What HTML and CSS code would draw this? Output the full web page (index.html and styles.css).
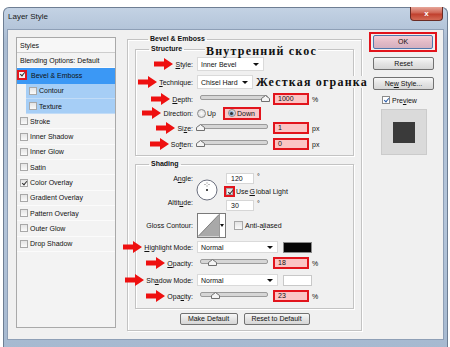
FILE: index.html
```html
<!DOCTYPE html>
<html lang="en">

<head>
    <meta charset="UTF-8">
    <meta name="viewport" content="width=device-width, initial-scale=1.0">
    <title>Layer Style</title>
    <link rel="stylesheet" href="styles.css">
</head>

<body>
    <!-- window -->
    <div class="window">
        <div class="titlebar">
            <span class="title">Layer Style</span>
            <a class="close" href="javascript:;">x</a>
        </div>

        <div class="content">
            <!-- styles list -->
            <ul class="styles">
                <li class="head">Styles</li>
                <li class="plain">Blending Options: Default</li>
                <li class="sel"><span class="cb on mark"></span>Bevel &amp; Emboss</li>
                <li class="sub"><span class="cb"></span>Contour</li>
                <li class="sub"><span class="cb"></span>Texture</li>
                <li><span class="cb"></span>Stroke</li>
                <li><span class="cb"></span>Inner Shadow</li>
                <li><span class="cb"></span>Inner Glow</li>
                <li><span class="cb"></span>Satin</li>
                <li><span class="cb on"></span>Color Overlay</li>
                <li><span class="cb"></span>Gradient Overlay</li>
                <li><span class="cb"></span>Pattern Overlay</li>
                <li><span class="cb"></span>Outer Glow</li>
                <li><span class="cb"></span>Drop Shadow</li>
            </ul>

            <!-- bevel & emboss -->
            <fieldset class="group outer">
                <legend>Bevel &amp; Emboss</legend>

                <fieldset class="group structure">
                    <legend>Structure</legend>
                    <div class="row r-style">
                        <label class="lbl"><svg class="arrow" width="19" height="12" viewBox="0 0 19 12"><polygon points="0,3.5 10,3.5 10,0 19,6 10,12 10,8.5 0,8.5"/></svg><span><u>S</u>tyle:</span></label>
                        <div class="select w-style">Inner Bevel</div>
                    </div>
                    <div class="row r-tech">
                        <label class="lbl"><svg class="arrow" width="19" height="12" viewBox="0 0 19 12"><polygon points="0,3.5 10,3.5 10,0 19,6 10,12 10,8.5 0,8.5"/></svg><span><u>T</u>echnique:</span></label>
                        <div class="select w-tech">Chisel Hard</div>
                    </div>
                    <div class="row r-depth">
                        <label class="lbl"><svg class="arrow" width="19" height="12" viewBox="0 0 19 12"><polygon points="0,3.5 10,3.5 10,0 19,6 10,12 10,8.5 0,8.5"/></svg><span><u>D</u>epth:</span></label>
                        <div class="slider"><span class="thumb" style="left:97%"><svg width="9" height="7" viewBox="0 0 9 7"><polygon points="0.5,6.5 0.5,3.5 4.5,0.5 8.5,3.5 8.5,6.5"/></svg></span></div>
                        <div class="num">1000</div><span class="unit">%</span>
                    </div>
                    <div class="row r-dir">
                        <label class="lbl"><svg class="arrow" width="19" height="12" viewBox="0 0 19 12"><polygon points="0,3.5 10,3.5 10,0 19,6 10,12 10,8.5 0,8.5"/></svg><span>Direction:</span></label>
                        <span class="radio"></span><span class="up">Up</span>
                        <div class="down"><span class="radio on"></span>Down</div>
                    </div>
                    <div class="row r-size">
                        <label class="lbl"><svg class="arrow" width="19" height="12" viewBox="0 0 19 12"><polygon points="0,3.5 10,3.5 10,0 19,6 10,12 10,8.5 0,8.5"/></svg><span>Si<u>z</u>e:</span></label>
                        <div class="slider"><span class="thumb" style="left:0%"><svg width="9" height="7" viewBox="0 0 9 7"><polygon points="0.5,6.5 0.5,3.5 4.5,0.5 8.5,3.5 8.5,6.5"/></svg></span></div>
                        <div class="num">1</div><span class="unit">px</span>
                    </div>
                    <div class="row r-soft">
                        <label class="lbl"><svg class="arrow" width="19" height="12" viewBox="0 0 19 12"><polygon points="0,3.5 10,3.5 10,0 19,6 10,12 10,8.5 0,8.5"/></svg><span>So<u>f</u>ten:</span></label>
                        <div class="slider"><span class="thumb" style="left:0%"><svg width="9" height="7" viewBox="0 0 9 7"><polygon points="0.5,6.5 0.5,3.5 4.5,0.5 8.5,3.5 8.5,6.5"/></svg></span></div>
                        <div class="num">0</div><span class="unit">px</span>
                    </div>
                </fieldset>

                <fieldset class="group shading">
                    <legend>Shading</legend>
                    <div class="angle">
                        <div class="angle-lbls">
                            <span>A<u>n</u>gle:</span>
                            <span>Altit<u>u</u>de:</span>
                        </div>
                        <svg class="dial" width="22" height="22" viewBox="0 0 22 22">
                            <circle cx="11" cy="11" r="10" fill="#fff" stroke="#6b6f7e"/>
                            <circle cx="11" cy="11" r="1" fill="#111"/>
                            <path d="M11 3.5v1M11 6.5v1M8.5 5.5h1M12.5 5.5h1" stroke="#555" stroke-width="0.8"/>
                        </svg>
                        <div class="angle-vals">
                            <div class="valrow"><div class="field">120</div><span class="deg">°</span></div>
                            <div class="glight"><span class="gbox"><span class="cb on"></span></span>Use <u>G</u>lobal Light</div>
                            <div class="valrow"><div class="field">30</div><span class="deg">°</span></div>
                        </div>
                    </div>
                    <div class="row r-gloss">
                        <label class="lbl"><span>Gloss Contour:</span></label>
                        <div class="contour">
                            <svg width="22" height="23" viewBox="0 0 22 23">
                                <polygon points="0,23 22,0 22,23" fill="#a9a9a9"/>
                                <line x1="0" y1="23" x2="22" y2="0" stroke="#666" stroke-width="0.8"/>
                            </svg>
                            <span class="drop"></span>
                        </div>
                        <span class="cb anti"></span><span>Anti-a<u>l</u>iased</span>
                    </div>
                    <div class="row r-hmode">
                        <label class="lbl"><svg class="arrow" width="19" height="12" viewBox="0 0 19 12"><polygon points="0,3.5 10,3.5 10,0 19,6 10,12 10,8.5 0,8.5"/></svg><span><u>H</u>ighlight Mode:</span></label>
                        <div class="select w-mode">Normal</div>
                        <span class="swatch black"></span>
                    </div>
                    <div class="row r-op1">
                        <label class="lbl"><svg class="arrow" width="19" height="12" viewBox="0 0 19 12"><polygon points="0,3.5 10,3.5 10,0 19,6 10,12 10,8.5 0,8.5"/></svg><span><u>O</u>pacity:</span></label>
                        <div class="slider"><span class="thumb" style="left:18%"><svg width="9" height="7" viewBox="0 0 9 7"><polygon points="0.5,6.5 0.5,3.5 4.5,0.5 8.5,3.5 8.5,6.5"/></svg></span></div>
                        <div class="num">18</div><span class="unit">%</span>
                    </div>
                    <div class="row r-smode">
                        <label class="lbl"><svg class="arrow" width="19" height="12" viewBox="0 0 19 12"><polygon points="0,3.5 10,3.5 10,0 19,6 10,12 10,8.5 0,8.5"/></svg><span>Sh<u>a</u>dow Mode:</span></label>
                        <div class="select w-mode">Normal</div>
                        <span class="swatch white"></span>
                    </div>
                    <div class="row r-op2">
                        <label class="lbl"><svg class="arrow" width="19" height="12" viewBox="0 0 19 12"><polygon points="0,3.5 10,3.5 10,0 19,6 10,12 10,8.5 0,8.5"/></svg><span>Opa<u>c</u>ity:</span></label>
                        <div class="slider"><span class="thumb" style="left:23%"><svg width="9" height="7" viewBox="0 0 9 7"><polygon points="0.5,6.5 0.5,3.5 4.5,0.5 8.5,3.5 8.5,6.5"/></svg></span></div>
                        <div class="num">23</div><span class="unit">%</span>
                    </div>
                </fieldset>

                <div class="defaults">
                    <a class="btn b-make" href="javascript:;">Make Default</a>
                    <a class="btn b-reset" href="javascript:;">Reset to Default</a>
                </div>
            </fieldset>

            <!-- buttons on the right -->
            <div class="side">
                <div class="ok-mark"><a class="btn ok" href="javascript:;">OK</a></div>
                <a class="btn s-btn s-reset" href="javascript:;">Reset</a>
                <a class="btn s-btn s-new" href="javascript:;">Ne<u>w</u> Style...</a>
                <div class="preview"><span class="cb on blue"></span>Pre<u>v</u>iew</div>
                <div class="swatchbox"><span class="sample"></span></div>
            </div>

            <!-- notes -->
            <div class="note note1">Внутренний скос</div>
            <div class="note note2">Жесткая огранка</div>
        </div>
    </div>
</body>

</html>
```

FILE: styles.css
```css
* {
    margin: 0;
    padding: 0;
    list-style-type: none;
    box-sizing: border-box;
}

body {
    width: 450px;
    height: 347px;
    overflow: hidden;
    background-color: #fff;
    font-family: "Liberation Sans", Arial, sans-serif;
    font-size: 7px;
    color: #111;
}

a {
    color: inherit;
    text-decoration: none;
}

u {
    text-decoration-thickness: 1px;
    text-underline-offset: 1px;
}

/* window frame */
.window {
    margin: 7px 0 0 3px;
    width: 445px;
    height: 345px;
    border: 1px solid #6e7e93;
    border-bottom: none;
    border-radius: 6px 6px 0 0;
    padding: 0 4px;
    background: linear-gradient(#c3d2e4, #aabcd2 10%, #b4c5da 60%, #a6b9d0);
}

.titlebar {
    height: 22px;
    display: flex;
    align-items: flex-start;
}

.title {
    margin-top: 4px;
    font-size: 8px;
    line-height: 10px;
    color: #1a1a1a;
}

.close {
    margin-left: auto;
    margin-top: -1px;
    width: 33px;
    height: 14px;
    border: 1px solid #6a2b24;
    border-top: none;
    border-radius: 0 0 4px 4px;
    background: linear-gradient(#e7a79a, #cf6453 45%, #c0402e 55%, #d46a55);
    color: #fff;
    font-weight: bold;
    font-size: 8px;
    line-height: 13px;
    text-align: center;
}

.content {
    position: relative;
    height: 309px;
    background-color: #f0f0f0;
    box-shadow: 0 0 0 1px #8e9fb6;
    display: flex;
    align-items: flex-start;
    padding: 7px 0 0 8px;
}

/* styles list */
.styles {
    width: 100px;
    height: 291px;
    margin-right: 11px;
    border: 1px solid #a9a9a9;
    background-color: #f3f3f3;
}

.styles li {
    height: 15.3px;
    display: flex;
    align-items: center;
    padding-left: 3px;
    border-bottom: 1px solid #fbfbfb;
}

.styles li.head {
    height: 15px;
    background-color: #f7f7f7;
    border-bottom: 1px solid #cdcdcd;
}

.styles li.sel {
    background-color: #3b98f5;
    padding-left: 0;
    border-bottom-color: #3b98f5;
}

.styles li.sub {
    margin-left: 9px;
    background-color: #a6cef6;
    border-bottom-color: #c2dcf7;
}

.cb {
    position: relative;
    flex: none;
    width: 8px;
    height: 8px;
    margin-right: 2px;
    border: 1px solid #a8a8a8;
    background: linear-gradient(#e4e4e4, #fafafa);
}

.cb.on::after {
    content: "";
    position: absolute;
    left: 2px;
    top: 0;
    width: 2px;
    height: 4px;
    border: solid #333;
    border-width: 0 1px 1px 0;
    transform: rotate(40deg);
}

.cb.mark {
    width: 10px;
    height: 10px;
    margin-right: 4px;
    border: 2px solid #e0151d;
    background: #f4f4f4;
}

.cb.mark::after {
    left: 1.5px;
    top: -1px;
}

/* fieldsets */
.group {
    border: 1px solid #c3c3c3;
    box-shadow: 1px 1px 0 #fff, inset 1px 1px 0 #fff;
    min-width: 0;
}

.group legend {
    margin-left: 13px;
    padding: 0 2px;
    font-weight: bold;
    line-height: 10px;
}

.outer {
    width: 235px;
    margin-top: -3px;
    padding: 0 7px 5px;
}

.structure {
    padding: 3px 0 4px;
}

.shading {
    margin-top: 3px;
    padding: 4px 0 6px;
}

/* rows */
.row {
    height: 14px;
    display: flex;
    align-items: center;
}

.r-tech { margin-top: 4px; }
.r-depth { margin-top: 3px; }
.r-size { margin-top: 1px; }
.r-soft { margin-top: 2px; }
.r-gloss { height: 25px; margin-top: 3px; }
.r-hmode { height: 12px; margin-top: 3px; }
.r-op1 { height: 12px; margin-top: 4px; }
.r-smode { height: 12px; margin-top: 5px; }
.r-op2 { height: 12px; margin-top: 4px; }

.lbl {
    flex: none;
    width: 57px;
    margin-right: 4px;
    display: flex;
    justify-content: flex-end;
    align-items: center;
    gap: 2px;
    white-space: nowrap;
}

.arrow {
    flex: none;
    fill: #ee1010;
}

.select {
    position: relative;
    height: 14px;
    padding-left: 3px;
    line-height: 13px;
    background-color: #fff;
    border: 1px solid #dadada;
}

.select::after {
    content: "";
    position: absolute;
    right: 4px;
    top: 5px;
    border: 3px solid transparent;
    border-top: 3px solid #111;
    border-bottom: none;
}

.w-style { width: 67px; }
.w-tech { width: 56px; }
.w-mode { width: 81px; height: 12px; line-height: 11px; }
.w-mode::after { top: 4px; }

/* slider */
.slider {
    position: relative;
    flex: none;
    width: 68px;
    height: 12px;
    margin-left: 3px;
}

.slider::before {
    content: "";
    position: absolute;
    left: 0;
    right: 0;
    top: 2px;
    height: 3px;
    border: 1px solid #9b9b9b;
    border-radius: 2px;
    background-color: #d6d6d6;
}

.thumb {
    position: absolute;
    top: 2px;
    margin-left: -4.5px;
    line-height: 0;
}

.thumb polygon {
    fill: #f4f4f4;
    stroke: #6f6f6f;
    stroke-width: 1;
}

.num {
    flex: none;
    width: 36px;
    height: 12px;
    margin-left: 5px;
    padding-left: 3px;
    line-height: 8px;
    border: 2px solid #e2141c;
    background-color: #fbc5c5;
}

.unit {
    margin-left: 3px;
}

/* direction */
.radio {
    position: relative;
    flex: none;
    width: 9px;
    height: 9px;
    border: 1px solid #8a8a8a;
    border-radius: 50%;
    background: radial-gradient(#fafafa, #d5d5d5);
}

.radio.on::after {
    content: "";
    position: absolute;
    left: 2px;
    top: 2px;
    width: 3px;
    height: 3px;
    border-radius: 50%;
    background-color: #333;
    box-shadow: 0 0 0 1px #8ab0d8;
}

.up {
    margin-left: 1px;
}

.down {
    width: 38px;
    height: 13px;
    margin-left: 7px;
    padding-left: 3px;
    display: flex;
    align-items: center;
    gap: 1px;
    border: 2px solid #e2141c;
    background-color: #f7c9c9;
}

.down .radio {
    width: 8px;
    height: 8px;
}

.down .radio.on::after {
    left: 1.5px;
    top: 1.5px;
}

/* angle */
.angle {
    height: 37px;
    display: flex;
}

.angle-lbls {
    width: 57px;
    display: flex;
    flex-direction: column;
    justify-content: space-between;
    align-items: flex-end;
    line-height: 12px;
    padding-bottom: 1px;
}

.dial {
    margin: 6px 0 0 3px;
}

.angle-vals {
    margin-left: 6px;
    display: flex;
    flex-direction: column;
}

.valrow {
    height: 11px;
    display: flex;
    align-items: flex-start;
    padding-left: 2px;
}

.field {
    width: 28px;
    height: 11px;
    padding-left: 4px;
    line-height: 10px;
    border: 1px solid #d6d6d6;
    background-color: #fff;
}

.deg {
    margin-left: 3px;
    line-height: 7px;
}

.glight {
    height: 11px;
    margin: 2px 0 3px;
    display: flex;
    align-items: center;
    gap: 1px;
}

.gbox {
    width: 11px;
    height: 11px;
    display: flex;
    align-items: center;
    justify-content: center;
    border: 2px solid #e2141c;
    background-color: #f7c9c9;
}

.gbox .cb {
    width: 7px;
    height: 7px;
    margin: 0;
}

.gbox .cb.on::after {
    left: 1.5px;
    top: -0.5px;
}

/* gloss contour */
.contour {
    width: 29px;
    height: 25px;
    display: flex;
    border: 1px solid #7a7a7a;
    background-color: #fff;
}

.contour svg {
    display: block;
}

.drop {
    position: relative;
    flex: none;
    width: 6px;
    border-left: 1px solid #9a9a9a;
}

.drop::after {
    content: "";
    position: absolute;
    left: 0;
    top: 10px;
    border: 2px solid transparent;
    border-top: 3px solid #111;
    border-bottom: none;
}

.cb.anti {
    width: 9px;
    height: 9px;
    margin-left: 8px;
    margin-right: 2px;
}

.swatch {
    flex: none;
    width: 29px;
    height: 11px;
    margin-left: 5px;
    border: 1px solid #8a8a8a;
}

.swatch.black { background-color: #050505; }
.swatch.white { background-color: #fff; border-color: #c8c8c8; }

/* buttons */
.defaults {
    margin-top: 4px;
    display: flex;
    justify-content: center;
    gap: 6px;
}

.btn {
    display: block;
    height: 12px;
    border: 1px solid #717171;
    border-radius: 2px;
    background: linear-gradient(#f7f7f7, #e4e4e4 50%, #d6d6d6);
    text-align: center;
    line-height: 10px;
    white-space: nowrap;
}

.b-make { width: 58px; }
.b-reset { width: 66px; }

.side {
    width: 68px;
    margin: -5px 0 0 7px;
    display: flex;
    flex-direction: column;
    align-items: flex-start;
}

.ok-mark {
    width: 68px;
    height: 20px;
    padding: 1px 2px;
    border: 2px solid #e2131b;
}

.btn.ok {
    width: 60px;
    height: 14px;
    line-height: 12px;
    border-color: #4f78ad;
    background: linear-gradient(#f3d0d8, #e2bac6 50%, #d4b0c0);
}

.s-btn {
    width: 61px;
    height: 13px;
    margin-left: 4px;
    line-height: 11px;
}

.s-reset { margin-top: 5px; }
.s-new { margin-top: 7px; }

.preview {
    margin: 6px 0 0 13px;
    height: 8px;
    display: flex;
    align-items: center;
}

.preview .cb {
    border-color: #8a8a8a;
    background: #fff;
}

.preview .cb.blue::after {
    border-color: #2c5ea8;
}

.swatchbox {
    width: 46px;
    height: 46px;
    margin: 5px 0 0 12px;
    padding-top: 1px;
    display: flex;
    justify-content: center;
    align-items: center;
    border: 1px solid #cbcbcb;
    background-color: #dadada;
}

.sample {
    width: 22px;
    height: 21px;
    background-color: #3a3a3a;
}

/* notes over the dialog */
.note {
    position: absolute;
    padding: 0 1px;
    font-family: "Liberation Serif", "Times New Roman", serif;
    font-weight: bold;
    font-size: 12px;
    line-height: 12px;
    letter-spacing: 1.2px;
    color: #111;
    background-color: #f0f0f0;
    white-space: nowrap;
}

.note1 {
    left: 197px;
    top: 15px;
}

.note2 {
    left: 247px;
    top: 46px;
}
```
